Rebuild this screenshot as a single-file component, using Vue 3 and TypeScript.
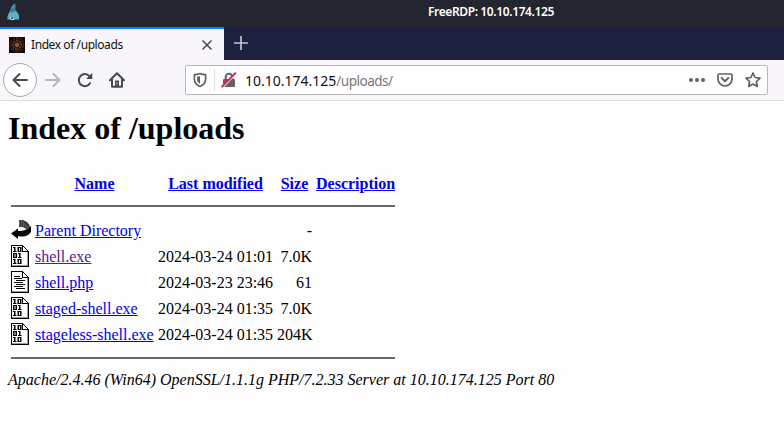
<script setup lang="ts">
interface Entry {
  icon: 'back' | 'binary' | 'text'
  name: string
  modified: string
  size: string
  visited?: boolean
}

const entries: Entry[] = [
  { icon: 'back', name: 'Parent Directory', modified: '', size: '-' },
  { icon: 'binary', name: 'shell.exe', modified: '2024-03-24 01:01', size: '7.0K', visited: true },
  { icon: 'text', name: 'shell.php', modified: '2024-03-23 23:46', size: '61' },
  { icon: 'binary', name: 'staged-shell.exe', modified: '2024-03-24 01:35', size: '7.0K' },
  { icon: 'binary', name: 'stageless-shell.exe', modified: '2024-03-24 01:35', size: '204K' },
]
</script>

<template>
  <div class="window">
    <header class="titlebar">
      <svg class="app-icon" width="14" height="18" viewBox="0 0 14 18">
        <path d="M.5 16C0 12 2.5 9.5 3.5 7C4.5 3.5 6 1.5 8.3 .8V7.5C11.5 9.5 12.8 13 12 16.5H.5Z" fill="#62adc1" />
        <path d="M3.5 7L8.3 .8L7.5 4L8 8L4 10Z" fill="#397f98" />
        <path d="M3 14H5L6 15.5H7V17H4Z" fill="#e4edef" />
        <path d="M4 14.5H6V16H4Z" fill="#263b4a" />
      </svg>
      <span class="title">FreeRDP: 10.10.174.125</span>
    </header>

    <div class="tabs">
      <div class="tab">
        <svg class="favicon" width="16" height="16" viewBox="0 0 16 16">
          <rect width="16" height="16" fill="#130c0b" />
          <g fill="none" stroke="#7c3c1b">
            <path d="M8 1L13 3L15 8L13 13L8 15L3 13L1 8L3 3Z" stroke-dasharray="2 1" opacity=".75" />
            <circle cx="8" cy="8" r="4.2" stroke-width="1.5" stroke-dasharray="1.5 .8" />
            <path d="M8 2V14M2 8H14M4 4L12 12M12 4L4 12" stroke-width=".6" />
          </g>
          <circle cx="8" cy="8" r="2" fill="#a66d50" />
          <circle cx="8" cy="8" r=".8" fill="#47302b" />
        </svg>
        <span class="tab-label">Index of /uploads</span>
        <svg class="close" width="12" height="12" viewBox="0 0 12 12">
          <path d="M1.5 1.5L10.5 10.5M10.5 1.5L1.5 10.5" stroke="#4b4a4d" stroke-width="1.5" />
        </svg>
      </div>
      <svg class="plus" width="14" height="14" viewBox="0 0 14 14">
        <path d="M7 0V14M0 7H14" stroke="#c2c2d0" stroke-width="1.7" />
      </svg>
    </div>

    <nav class="toolbar">
      <button class="back" aria-label="Back">
        <svg width="16" height="16" viewBox="0 0 16 16"><path d="M15 8H1.5M7.5 2L1.5 8L7.5 14" fill="none" stroke="#4a494c" stroke-width="2" stroke-linecap="round" stroke-linejoin="round" /></svg>
      </button>
      <svg class="forward" width="16" height="16" viewBox="0 0 16 16"><path d="M1 8H14.5M8.5 2L14.5 8L8.5 14" fill="none" stroke="#b7b6b9" stroke-width="2" stroke-linecap="round" stroke-linejoin="round" /></svg>
      <svg class="reload" width="16" height="16" viewBox="0 0 16 16">
        <path d="M12.4 4.2A6 6 0 1 0 13 11.2" fill="none" stroke="#4a494c" stroke-width="2" stroke-linecap="round" />
        <path d="M15.3 .8V7H9.1Z" fill="#4a494c" />
      </svg>
      <svg class="home" width="16" height="16" viewBox="0 0 16 16">
        <path d="M1 8.3L8 1.3L15 8.3M3 7.5V14.8H13V7.5" fill="none" stroke="#4a494c" stroke-width="2" stroke-linecap="round" stroke-linejoin="round" />
        <path d="M6 15V8.5H10V15Z" fill="#4a494c" /><path d="M8 10V13" stroke="#aaa9ac" />
      </svg>
      <div class="urlbar">
        <svg class="shield" width="14" height="16" viewBox="0 0 14 16">
          <path d="M7 1.5C5 2.4 3 2.6 1.4 2.6V7C1.4 10.6 3.4 13 7 14.5C10.6 13 12.6 10.6 12.6 7V2.6C11 2.6 9 2.4 7 1.5Z" fill="none" stroke="#626164" stroke-width="1.7" stroke-linejoin="round" />
          <path d="M7 4V12C5 11 4 9.3 4 7V4.7Q5.5 4.5 7 4Z" fill="#626164" />
        </svg>
        <span class="divider"></span>
        <svg class="lock" width="16" height="16" viewBox="0 0 16 16">
          <path d="M4.7 8V5A3.3 3.3 0 0 1 11.3 5V8" fill="none" stroke="#626164" stroke-width="2" />
          <rect x="2" y="7" width="12" height="8" rx="1" fill="#626164" />
          <path d="M1.8 15.5L14.8 2.2" stroke="#fff" stroke-width="1.2" />
          <path d="M1.2 14.5L14.2 1.2" stroke="#e22850" stroke-width="2" stroke-linecap="round" />
        </svg>
        <span class="url">10.10.174.125<span class="path">/uploads/</span></span>
        <svg class="dots" width="16" height="16" viewBox="0 0 16 16" fill="#626164"><circle cx="2" cy="8" r="2" /><circle cx="8" cy="8" r="2" /><circle cx="14" cy="8" r="2" /></svg>
        <svg class="pocket" width="16" height="16" viewBox="0 0 16 16" fill="none" stroke="#626164" stroke-linecap="round" stroke-linejoin="round">
          <path d="M2.2 2H13.8Q15 2 15 3.2V7A7 7 0 0 1 1 7V3.2Q1 2 2.2 2Z" stroke-width="1.7" />
          <path d="M4.7 6L8 9.2L11.3 6" stroke-width="1.9" />
        </svg>
        <svg class="star" width="16" height="16" viewBox="0 0 16 16"><path d="M8 1L10.1 5.5L15 6.1L11.4 9.5L12.3 14.5L8 12L3.7 14.5L4.6 9.5L1 6.1L5.9 5.5Z" fill="none" stroke="#626164" stroke-width="1.7" stroke-linejoin="round" /></svg>
      </div>
    </nav>

    <main class="page">
      <h1>Index of /uploads</h1>
      <table>
        <colgroup><col class="c-icon"><col class="c-name"><col class="c-date"><col class="c-size"><col class="c-desc"></colgroup>
        <thead>
          <tr class="heading"><th></th><th><a>Name</a></th><th><a>Last modified</a></th><th><a>Size</a></th><th><a>Description</a></th></tr>
          <tr><th colspan="5"><hr></th></tr>
        </thead>
        <tbody>
          <tr v-for="entry in entries" :key="entry.name" class="entry">
            <td class="icon-cell">
              <svg v-if="entry.icon === 'back'" class="file-icon" width="20" height="22" viewBox="0 0 20 22">
                <path d="M8 1H12L16 3L18.5 6L19 9L15 10L12 8H8Z" fill="#3b3b3b" />
                <path d="M8 2H12M8 4H14M8 6H16M10 8H18" stroke="#999" stroke-width=".7" stroke-dasharray="1 1" />
                <path d="M20 7V12.5Q18.5 16 14.5 17Q11 18 7 17V20L0 14.5L7 9.5V12Q15 12.5 20 7Z" fill="#000" />
              </svg>
              <svg v-else class="file-icon" width="20" height="22" viewBox="0 0 20 22" shape-rendering="crispEdges">
                <path d="M1 1H12L17 6V21H1Z" fill="#fff" />
                <path d="M1 20.5H17M16.5 7V21" fill="none" stroke="#999" />
                <path d="M.5 21.5V.5H11.5M0 21.5H18M17.5 22V6M11.5 0V6.5H18M12 1.5H13M13 2.5H14M14 3.5H15M15 4.5H16M16 5.5H17" fill="none" stroke="#000" />
                <path v-if="entry.icon === 'text'" d="M3 5.5H9M3 7.5H11M5 9.5H14M3 11.5H12M5 13.5H14M3 15.5H12M5 17.5H14" stroke="#000" />
                <g v-else fill="#000" fill-rule="evenodd" shape-rendering="auto">
                  <path d="M2 2H4.5V6H5.5V7H2V6H3V3H2Z" />
                  <path d="M6.5 2H10.5V7H6.5ZM8 3V6H9V3Z" />
                  <path d="M2 8H6V13H2ZM3.5 9V12H4.5V9Z" />
                  <path d="M7 8H9.5V12H10.5V13H7V12H8V9H7Z" />
                  <path d="M2 14H4.5V18H5.5V19H2V18H3V15H2Z" />
                  <path d="M6.5 14H10.5V19H6.5ZM8 15V18H9V15Z" />
                </g>
              </svg>
            </td>
            <td><a :class="{ visited: entry.visited }">{{ entry.name }}</a></td>
            <td class="right">{{ entry.modified }}</td>
            <td class="right">{{ entry.size }}</td>
            <td></td>
          </tr>
          <tr><th colspan="5"><hr></th></tr>
        </tbody>
      </table>
      <address>Apache/2.4.46 (Win64) OpenSSL/1.1.1g PHP/7.2.33 Server at 10.10.174.125 Port 80</address>
    </main>
  </div>
</template>

<style>
body { margin: 0; background: #fffeff; }
</style>

<style scoped>
.window { height: 429px; overflow: hidden; background: #fffeff; }
.titlebar { height: 27px; display: flex; background: #23262e; color: #fff; }
.app-icon { margin: 3px 0 0 7px; }
.title { margin: 4px 0 0 407px; font: 600 12px/16px "Noto Sans", sans-serif; white-space: nowrap; letter-spacing: -.38px; }
.tabs { height: 33px; display: flex; background: #1f2140; }
.tab { width: 224px; height: 33px; box-sizing: border-box; border-top: 2px solid #0a84ff; display: flex; align-items: center; background: #f8f6fa; padding: 0 11px 0 9px; }
.favicon { margin-right: 6px; }
.tab-label { font: 12px/18px "Noto Sans", sans-serif; color: #111; white-space: nowrap; letter-spacing: -.42px; }
.close { margin-left: auto; }
.plus { margin: 9px 0 0 10px; }
.toolbar { height: 41px; box-sizing: border-box; border-bottom: 1px solid #dddce0; background: #f8f6fa; display: flex; align-items: center; padding-left: 3px; }
.back { width: 34px; height: 34px; box-sizing: border-box; border: 1px solid #aaa9ad; border-radius: 50%; background: #fffeff; padding: 0; display: grid; place-items: center; }
.forward { margin-left: 8px; }
.reload, .home { margin-left: 16px; }
.urlbar { width: 583px; height: 30px; box-sizing: border-box; border: 1px solid #b8b7bb; border-radius: 2px; margin-left: 60px; background: #fffeff; display: flex; align-items: center; padding: 0 6px 0 7px; }
.divider { height: 22px; width: 1px; background: #dddce0; margin: 0 6px 0 7px; }
.url { margin: 2px 0 0 8px; font: 14px/20px "Noto Sans", sans-serif; color: #111; white-space: nowrap; }
.path { color: #77767a; font-size: 13.5px; letter-spacing: -.5px; }
.dots { margin-left: auto; }
.pocket, .star { margin-left: 12px; }
.page { padding: 9px 8px 0; font: 16px/18px "Liberation Serif", "Times New Roman", serif; color: #000; }
h1 { margin: 0 0 26px; font-size: 32px; line-height: 36px; }
table { width: 390px; table-layout: fixed; border-collapse: separate; border-spacing: 2px; }
.c-icon { width: 22px; } .c-name { width: 121px; } .c-date { width: 117px; } .c-size { width: 37px; } .c-desc { width: 81px; }
th, td { padding: 1px; white-space: nowrap; }
.heading th { height: 18px; }
.entry td { height: 20px; padding: 4px 1px 0; vertical-align: top; }
.entry .icon-cell { height: 22px; padding: 1px; }
.right { text-align: right; }
.file-icon { display: block; }
a { color: #0000ee; text-decoration: underline; }
.visited { color: #551a8b; }
hr { height: 2px; margin: 8px 0; border: 0; background: #68676b; }
address { margin-top: 1px; font-style: italic; white-space: nowrap; }
</style>
